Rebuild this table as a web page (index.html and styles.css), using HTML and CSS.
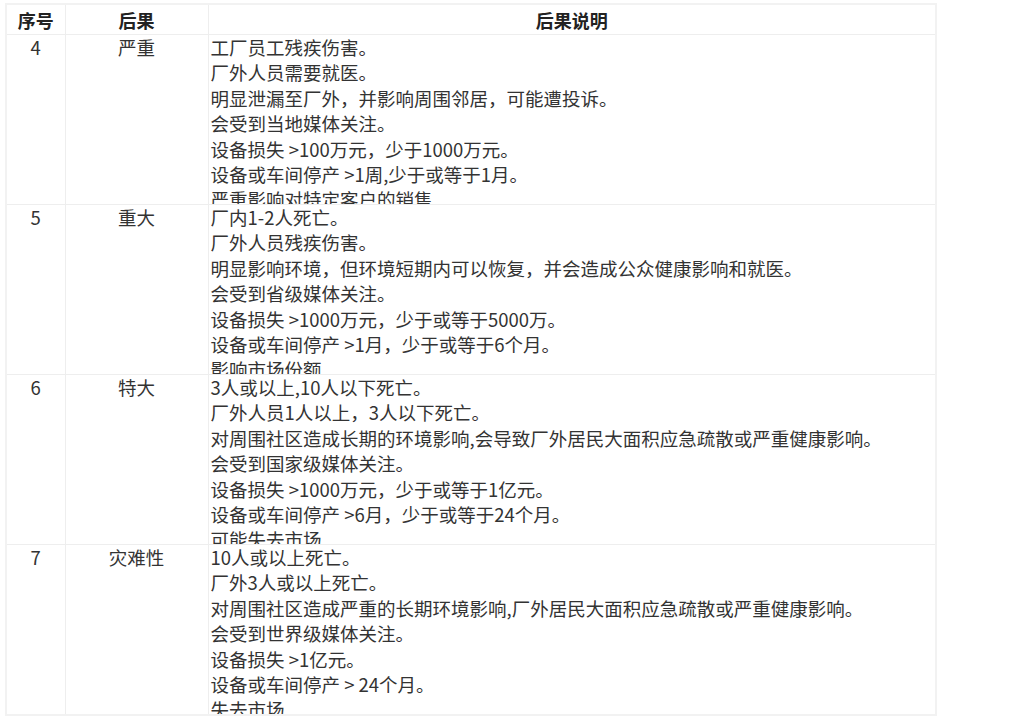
FILE: index.html
```html
<!DOCTYPE html>
<html lang="zh-CN">
<head>
    <meta charset="UTF-8">
    <title>后果等级</title>
    <link rel="stylesheet" href="styles.css">
</head>
<body>
    <div class="wrap">
        <table class="grade-table">
            <colgroup>
                <col class="col-no">
                <col class="col-level">
                <col class="col-desc">
            </colgroup>
            <thead>
                <tr>
                    <th>序号</th>
                    <th>后果</th>
                    <th>后果说明</th>
                </tr>
            </thead>
            <tbody>
                <tr>
                    <td class="center">4</td>
                    <td class="center">严重</td>
                    <td><div class="desc">
                        工厂员工残疾伤害。<br>
                        厂外人员需要就医。<br>
                        明显泄漏至厂外，并影响周围邻居，可能遭投诉。<br>
                        会受到当地媒体关注。<br>
                        设备损失 &gt;100万元，少于1000万元。<br>
                        设备或车间停产 &gt;1周,少于或等于1月。<br>
                        严重影响对特定客户的销售
                    </div></td>
                </tr>
                <tr>
                    <td class="center">5</td>
                    <td class="center">重大</td>
                    <td><div class="desc">
                        厂内1-2人死亡。<br>
                        厂外人员残疾伤害。<br>
                        明显影响环境，但环境短期内可以恢复，并会造成公众健康影响和就医。<br>
                        会受到省级媒体关注。<br>
                        设备损失 &gt;1000万元，少于或等于5000万。<br>
                        设备或车间停产 &gt;1月，少于或等于6个月。<br>
                        影响市场份额
                    </div></td>
                </tr>
                <tr>
                    <td class="center">6</td>
                    <td class="center">特大</td>
                    <td><div class="desc">
                        3人或以上,10人以下死亡。<br>
                        厂外人员1人以上，3人以下死亡。<br>
                        对周围社区造成长期的环境影响,会导致厂外居民大面积应急疏散或严重健康影响。<br>
                        会受到国家级媒体关注。<br>
                        设备损失 &gt;1000万元，少于或等于1亿元。<br>
                        设备或车间停产 &gt;6月，少于或等于24个月。<br>
                        可能失去市场
                    </div></td>
                </tr>
                <tr>
                    <td class="center">7</td>
                    <td class="center">灾难性</td>
                    <td><div class="desc">
                        10人或以上死亡。<br>
                        厂外3人或以上死亡。<br>
                        对周围社区造成严重的长期环境影响,厂外居民大面积应急疏散或严重健康影响。<br>
                        会受到世界级媒体关注。<br>
                        设备损失 &gt;1亿元。<br>
                        设备或车间停产 &gt; 24个月。<br>
                        失去市场
                    </div></td>
                </tr>
            </tbody>
        </table>
    </div>
</body>
</html>
```

FILE: styles.css
```css
body {
    margin: 0;
    padding: 0;
    background: #fff;
    font-family: "Noto Sans CJK SC", "Noto Sans", sans-serif;
    font-size: 18.5px;
    color: #333;
}
.wrap {
    padding: 3px 0 0 5px;
}
.grade-table {
    border-collapse: collapse;
    table-layout: fixed;
    width: 932px;
    border: 2px solid #f2f2f2;
}
.col-no {
    width: 59px;
}
.col-level {
    width: 143px;
}
.grade-table th,
.grade-table td {
    border: 1px solid #eeeeee;
    padding: 0;
    vertical-align: top;
}
.grade-table th {
    height: 29px;
    font-size: 18px;
    font-weight: bold;
    text-align: center;
    vertical-align: middle;
    color: #222;
}
.grade-table td {
    line-height: 25.4px;
}
.center {
    text-align: center;
}
.desc {
    height: 169px;
    overflow: hidden;
    padding-left: 2px;
}
```
